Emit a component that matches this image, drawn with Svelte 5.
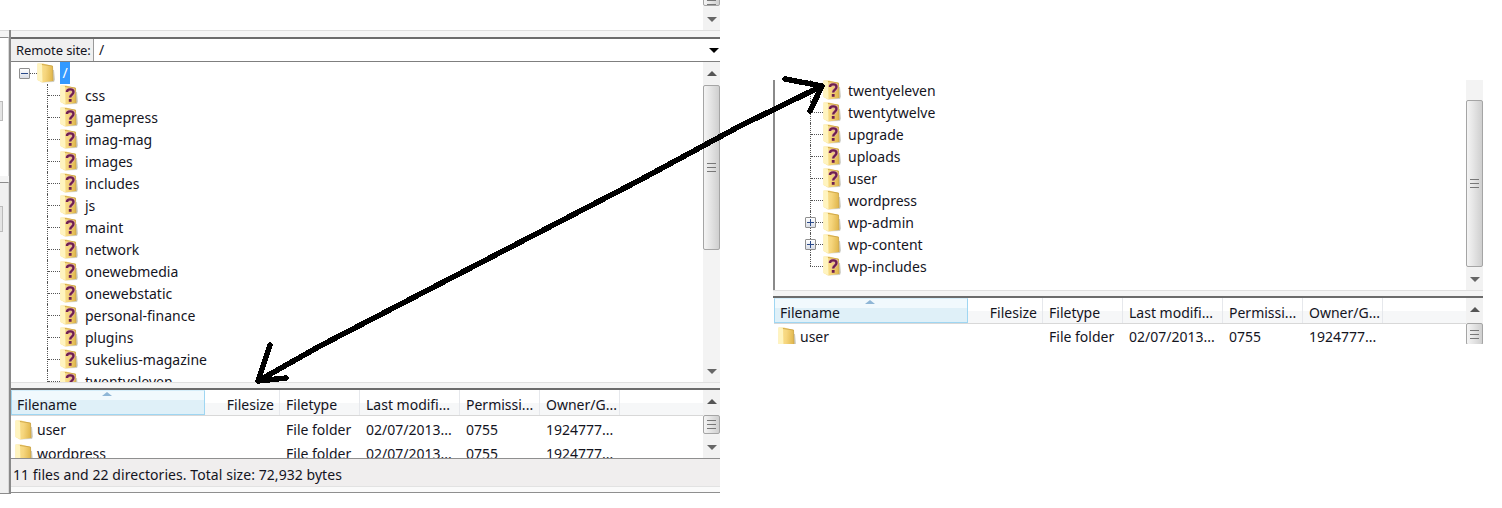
<script>
  const leftTree = ['css', 'gamepress', 'imag-mag', 'images', 'includes', 'js', 'maint', 'network', 'onewebmedia', 'onewebstatic', 'personal-finance', 'plugins', 'sukelius-magazine', 'twentyeleven'];

  const rightTree = [
    { name: 'twentyeleven', unknown: true },
    { name: 'twentytwelve', unknown: true },
    { name: 'upgrade', unknown: true },
    { name: 'uploads', unknown: true },
    { name: 'user', unknown: true },
    { name: 'wordpress' },
    { name: 'wp-admin', expandable: true },
    { name: 'wp-content', expandable: true },
    { name: 'wp-includes', unknown: true, last: true }
  ];

  const columns = ['Filesize', 'Filetype', 'Last modifi...', 'Permissi...', 'Owner/G...'];
</script>

{#snippet folder(unknown)}
  <svg class="folder" width="18" height="20" viewBox="0 0 18 20">
    <defs>
      <linearGradient id="folder-face" x1="0" y1="0" x2="1" y2="0.1">
        <stop offset="0" stop-color="#fbe596" />
        <stop offset="0.55" stop-color="#f6d67e" />
        <stop offset="1" stop-color="#e2b950" />
      </linearGradient>
    </defs>
    <path d="M4 19.5 L17 19 L18 16.5 L17 7 L15.5 7 L15.5 17.5 Z" fill="#c4c4bd" opacity="0.8" />
    <path d="M0.5 0.5 L6 0.5 L15.5 3 L16 18 L5 19.5 L0.5 17 Z" fill="url(#folder-face)" />
    <path d="M0.5 0.5 L5 1.5 L5.5 19.3 L0.5 17 Z" fill="#fff4bf" />
    <path d="M5 1.5 L15.5 3 L16 18" fill="none" stroke="#c99f3e" stroke-width="0.8" />
    {#if unknown}
      <path d="M7 7 C7 3.6 13.5 3.6 13.5 7 C13.5 9.6 10.2 9.6 10.2 12.5" fill="none" stroke="#e3b0a6" stroke-width="3.6" />
      <path d="M7 7 C7 3.6 13.5 3.6 13.5 7 C13.5 9.6 10.2 9.6 10.2 12.5" fill="none" stroke="#6e1f50" stroke-width="2.3" />
      <rect x="8.8" y="14" width="2.8" height="2.8" fill="#6e1f50" />
    {/if}
  </svg>
{/snippet}

{#snippet scrollbar(height, thumbHeight, thumbGap = 1, showUp = true)}
  <div class="scrollbar" style="height: {height}px">
    {#if showUp}
      <div class="arrow"><span class="tri up"></span></div>
    {/if}
    <div class="thumb" style="height: {thumbHeight}px; margin-top: {thumbGap}px">
      <span class="grip"></span>
    </div>
    <div class="track"></div>
    <div class="arrow"><span class="tri down"></span></div>
  </div>
{/snippet}

{#snippet listHeader()}
  <div class="list-head">
    <div class="cols">
      <div class="col name active">
        <span class="sort"></span>
        Filename
      </div>
      {#each columns as col, i}
        <div class="col c{i}">{col}</div>
      {/each}
    </div>
  </div>
{/snippet}

{#snippet fileRow(name)}
  <div class="cols file-row">
    <div class="col name">{@render folder(false)}<span>{name}</span></div>
    <div class="col c0"></div>
    <div class="col c1">File folder</div>
    <div class="col c2">02/07/2013...</div>
    <div class="col c3">0755</div>
    <div class="col c4">1924777...</div>
  </div>
{/snippet}

<div class="page">
  <div class="win">
    <div class="top-row">
      {@render scrollbar(30, 12, -6, false)}
    </div>

    <div class="win-main">
      <div class="strip">
        <div class="strip-box first"><span class="stub one"></span></div>
        <div class="strip-box second"><span class="stub two"></span></div>
      </div>

      <div class="panel">
        <div class="band"></div>
        <div class="remote">
          <div class="remote-label">Remote site:</div>
          <div class="remote-input">/</div>
          <span class="tri combo"></span>
        </div>

        <div class="tree-wrap left-tree">
          <div class="tree">
            <div class="row root">
              <span class="box minus"></span>
              <span class="dash"></span>
              {@render folder(false)}
              <span class="selected">/</span>
            </div>
            {#each leftTree as name}
              <div class="row child">
                <span class="conn"></span>
                {@render folder(true)}
                <span class="label">{name}</span>
              </div>
            {/each}
          </div>
          {@render scrollbar(320, 165)}
        </div>

        <div class="sash"></div>

        <div class="list left-list">
          <div class="list-main">
            {@render listHeader()}
            <div class="rows">
              {@render fileRow('user')}
              {@render fileRow('wordpress')}
            </div>
          </div>
          {@render scrollbar(68, 19, 3)}
        </div>

        <div class="status">11 files and 22 directories. Total size: 72,932 bytes</div>
        <div class="band-bottom"></div>
      </div>
    </div>
  </div>

  <div class="pane">
    <div class="tree-wrap right-tree">
      <div class="tree">
        {#each rightTree as item}
          <div class="row child" class:last={item.last}>
            <span class="conn">
              {#if item.expandable}<span class="box plus"></span>{/if}
            </span>
            {@render folder(item.unknown)}
            <span class="label">{item.name}</span>
          </div>
        {/each}
      </div>
      {@render scrollbar(210, 167, 20, false)}
    </div>

    <div class="sash"></div>

    <div class="list right-list">
      <div class="list-main">
        {@render listHeader()}
        <div class="rows">
          {@render fileRow('user')}
        </div>
      </div>
      {@render scrollbar(46, 22, 3)}
    </div>
  </div>

  <!-- hand-drawn arrow lies over both screenshots -->
  <svg class="scrawl" width="1502" height="508" viewBox="0 0 1502 508" shape-rendering="crispEdges">
    <g fill="none" stroke="#000" stroke-width="5.5" stroke-linecap="round" stroke-linejoin="round">
      <path d="M258 381 L320 346 L640 180 L740 126 L822 86" />
      <path d="M785 79 L822 86 L810 111" />
      <path d="M270 345 L258 381 L286 378" />
    </g>
  </svg>
</div>

<style>
  :global(body) {
    margin: 0;
    background: #fff;
  }

  .page {
    position: relative;
    display: flex;
    align-items: flex-start;
    width: 1502px;
    height: 508px;
    overflow: hidden;
    font-family: "Noto Sans", sans-serif;
    font-size: 14px;
    color: #14141e;
  }

  .scrawl {
    position: absolute;
    inset: 0;
    pointer-events: none;
  }

  /* ── Left window ────────────────────────────────────────── */

  .win {
    width: 720px;
    flex-shrink: 0;
  }

  .top-row {
    display: flex;
    justify-content: flex-end;
    height: 30px;
  }

  .win-main {
    display: flex;
  }

  .strip {
    width: 9px;
    flex-shrink: 0;
    display: flex;
    flex-direction: column;
    gap: 6px;
    background: #f4f4f4;
    border-top: 1px solid #dcdcdc;
    border-bottom: 1px solid #8c8c8c;
    box-sizing: border-box;
    height: 464px;
    padding-top: 6px;
  }

  .strip-box {
    display: flex;
    align-items: center;
    background: #f0f0f0;
    border-right: 1px solid #dadada;
  }

  .strip-box.first {
    height: 138px;
    border-top: 1px solid #8c8c8c;
    background: #fff;
  }

  .strip-box.second {
    flex: 1;
    border-top: 1px solid #8c8c8c;
    align-items: flex-start;
  }

  .stub {
    display: block;
    width: 2px;
    background: #e4e4e4;
    border: 1px solid #bbb;
    border-left: none;
  }

  .stub.one { height: 18px; margin-top: 8px; }
  .stub.two { height: 24px; margin-top: 23px; }

  .panel {
    flex: 1;
    min-width: 0;
    border-left: 2px solid #8a8a8a;
  }

  .band {
    height: 6px;
    background: #f5f5f5;
    border-top: 1px solid #dedede;
    border-bottom: 2px solid #6c6c6c;
  }

  .remote {
    position: relative;
    display: flex;
    height: 22px;
    border-bottom: 1px solid #7f7f7f;
    white-space: nowrap;
  }

  .remote-label {
    width: 77px;
    flex-shrink: 0;
    padding-left: 5px;
    background: #f0f0f0;
    border-right: 1px solid #9a9a9a;
    font-size: 13px;
    letter-spacing: -0.1px;
    line-height: 22px;
  }

  .remote-input {
    padding-left: 5px;
    line-height: 22px;
  }

  /* ── Tree ───────────────────────────────────────────────── */

  .tree-wrap {
    display: flex;
    background: #fff;
    overflow: hidden;
  }

  .left-tree { height: 320px; }

  .tree {
    flex: 1;
    min-width: 0;
    overflow: hidden;
  }

  .left-tree .tree { padding-left: 8px; }
  .left-tree .child { padding-left: 28px; }
  .right-tree .child { padding-left: 35px; }
  .right-tree .tree { margin-top: -1px; }

  .row {
    display: flex;
    align-items: center;
    height: 22px;
    white-space: nowrap;
  }

  .conn {
    position: relative;
    width: 13px;
    height: 22px;
    flex-shrink: 0;
    border-left: 1px dotted #555;
    box-sizing: border-box;
  }

  .conn::after {
    content: '';
    position: absolute;
    left: 0;
    right: 0;
    top: 11px;
    border-top: 1px dotted #555;
  }

  .row.last .conn {
    border-left: none;
  }

  .row.last .conn::before {
    content: '';
    position: absolute;
    left: 0;
    top: 0;
    height: 11px;
    border-left: 1px dotted #555;
  }

  .folder {
    flex-shrink: 0;
    margin-right: 6px;
  }

  .label {
    padding-left: 1px;
  }

  .box {
    position: relative;
    display: block;
    flex-shrink: 0;
    box-sizing: border-box;
    width: 11px;
    height: 11px;
    border: 1px solid #8f8f8f;
    border-radius: 1px;
    background: linear-gradient(#fff, #d9dde6);
    z-index: 1;
  }

  .box::before {
    content: '';
    position: absolute;
    left: 1px;
    right: 1px;
    top: 4px;
    height: 1px;
    background: #2a4a8a;
  }

  .box.plus {
    position: absolute;
    left: -6px;
    top: 6px;
  }

  .box.plus::after {
    content: '';
    position: absolute;
    top: 1px;
    bottom: 1px;
    left: 4px;
    width: 1px;
    background: #2a4a8a;
  }

  .dash {
    width: 7px;
    border-top: 1px dotted #555;
    flex-shrink: 0;
  }

  .root .folder {
    margin-right: 5px;
  }

  .selected {
    display: inline-block;
    width: 10px;
    height: 22px;
    line-height: 22px;
    text-align: center;
    background: #3399ff;
    color: #fff;
  }

  .sash {
    height: 5px;
    background: #f5f5f5;
    border-top: 1px solid #e0e0e0;
    border-bottom: 2px solid #6c6c6c;
  }

  /* ── Scrollbar ──────────────────────────────────────────── */

  .scrollbar {
    width: 17px;
    flex-shrink: 0;
    display: flex;
    flex-direction: column;
    background: #f3f3f3;
    overflow: hidden;
  }

  .arrow {
    height: 22px;
    flex-shrink: 0;
    display: flex;
    align-items: center;
    justify-content: center;
    background: #f2f2f2;
  }

  .track {
    flex: 1;
  }

  .thumb {
    flex-shrink: 0;
    display: flex;
    align-items: center;
    justify-content: center;
    box-sizing: border-box;
    border: 1px solid #a5a5a5;
    border-radius: 2px;
    background: linear-gradient(90deg, #f4f4f4, #e4e4e4 45%, #cfcfcf);
  }

  .grip {
    display: block;
    flex-shrink: 0;
    width: 9px;
    height: 7px;
    border-top: 1px solid #777;
    border-bottom: 1px solid #777;
    background: linear-gradient(#777, #777) center / 100% 1px no-repeat;
  }

  .tri {
    display: block;
    width: 0;
    height: 0;
    border-left: 5px solid transparent;
    border-right: 5px solid transparent;
  }

  .tri.up { border-bottom: 5px solid #555; }
  .tri.down { border-top: 5px solid #666; }

  .tri.combo {
    position: absolute;
    right: 1px;
    top: 9px;
    border-top: 5px solid #000;
  }

  /* ── File list ──────────────────────────────────────────── */

  .list {
    display: flex;
    overflow: hidden;
  }

  .left-list { height: 68px; }
  .right-list { height: 46px; }

  .list-main {
    flex: 1;
    min-width: 0;
  }

  .list-head {
    height: 25px;
    border-bottom: 1px solid #d8d8d8;
    background: linear-gradient(#fff 50%, #f6f7f8 50%);
  }

  .cols {
    display: grid;
    grid-template-columns: 194px 75px 80px 100px 80px 80px;
  }

  .col {
    position: relative;
    box-sizing: border-box;
    height: 25px;
    line-height: 29px;
    padding-left: 6px;
    white-space: nowrap;
    border-right: 1px solid #e6e8ec;
  }

  .col.c0 {
    text-align: right;
    padding: 0 5px 0 0;
  }

  .col.name.active {
    background: linear-gradient(#f1f9fd 40%, #dff0f8 40%);
    border: 1px solid #9fd6f2;
    border-top-color: #d6eefa;
    padding-left: 5px;
    line-height: 27px;
  }

  .sort {
    position: absolute;
    left: 90px;
    top: 1px;
    width: 0;
    height: 0;
    border-left: 5px solid transparent;
    border-right: 5px solid transparent;
    border-bottom: 4px solid #8fb6d6;
  }

  .rows {
    padding-top: 2px;
    height: 100%;
    background: #fff;
  }

  .right-list .rows {
    padding-top: 1px;
  }

  .file-row .col {
    height: 24px;
    line-height: 24px;
    border-right: none;
  }

  .file-row .col.name {
    display: flex;
    align-items: center;
    padding-left: 4px;
  }

  .file-row .folder {
    margin-right: 4px;
  }

  .status {
    height: 27px;
    line-height: 32px;
    padding-left: 2px;
    letter-spacing: 0.06px;
    background: #f0eeee;
    border-top: 1px solid #8f8f8f;
  }

  .band-bottom {
    height: 5px;
    background: #fafafa;
    border-top: 1px solid #e2e2e2;
    border-bottom: 1px solid #8f8f8f;
  }

  /* ── Right crop ─────────────────────────────────────────── */

  .pane {
    width: 710px;
    height: 264px;
    margin-left: 53px;
    margin-top: 80px;
    overflow: hidden;
  }

  .right-tree {
    height: 210px;
    border-left: 2px solid #8a8a8a;
  }

  .right-list {
    padding-left: 1px;
  }
</style>
